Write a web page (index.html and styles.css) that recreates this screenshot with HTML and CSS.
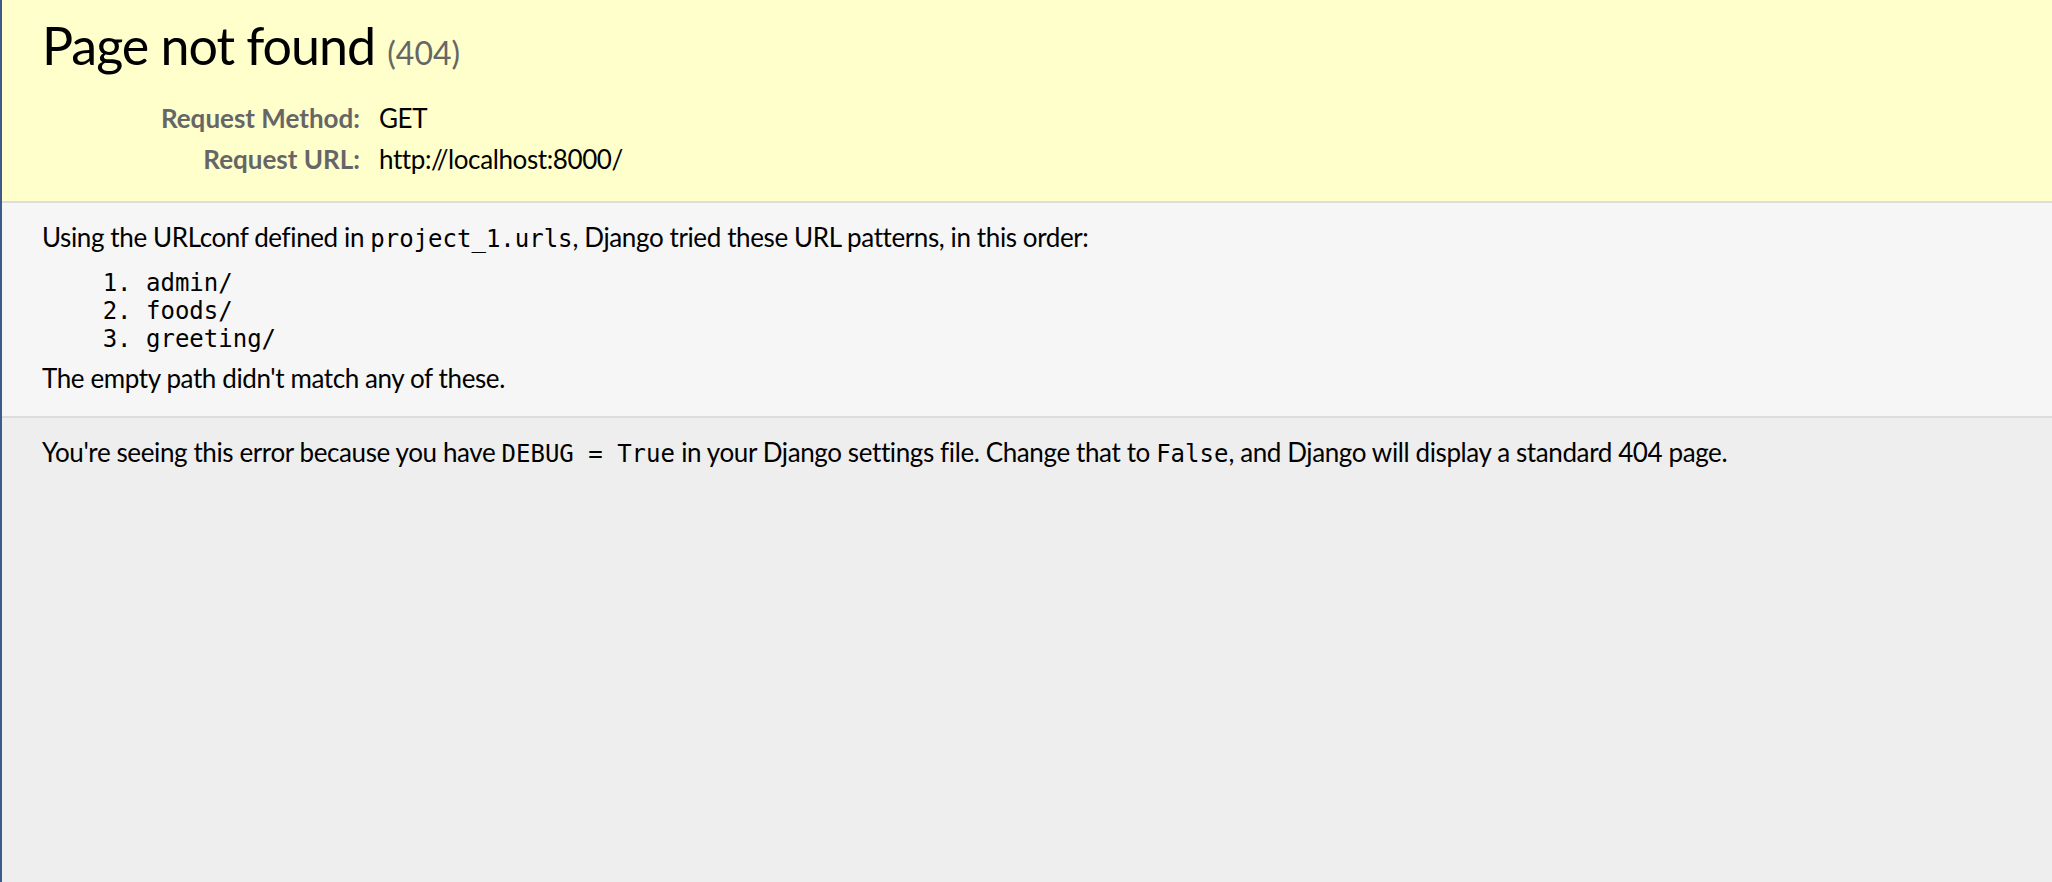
FILE: index.html
```
<!DOCTYPE html>
<html lang="en">
<head>
<meta charset="utf-8">
<title>Page not found at /</title>
<link rel="stylesheet" href="styles.css">
</head>
<body>
<div id="summary" class="section summary">
  <h1 class="title">Page not found <span class="code-num">(404)</span></h1>
  <table class="meta">
    <tr>
      <th class="meta-label">Request Method:</th>
      <td class="meta-value">GET</td>
    </tr>
    <tr>
      <th class="meta-label">Request URL:</th>
      <td class="meta-value">http://localhost:8000/</td>
    </tr>
  </table>
</div>
<div id="info" class="section info">
  <p class="text">Using the URLconf defined in <code class="mono">project_1.urls</code>, Django tried these URL patterns, in this order:</p>
  <ol class="patterns">
    <li class="pattern">admin/</li>
    <li class="pattern">foods/</li>
    <li class="pattern">greeting/</li>
  </ol>
  <p class="text">The empty path didn't match any of these.</p>
</div>
<div id="explanation" class="section explanation">
  <p class="text">You're seeing this error because you have <code class="mono">DEBUG = True</code> in your Django settings file. Change that to <code class="mono">False</code>, and Django will display a standard 404 page.</p>
</div>
</body>
</html>
```
FILE: styles.css
```
html, body, div, h1, p, ol, li, table, th, td, span, code {
  margin: 0;
  padding: 0;
}

html {
  background: #eee;
}

body {
  min-height: 100vh;
  box-sizing: border-box;
  border-left: 2px solid #3c5a8c;
  background: #eee;
  color: #000;
  font-family: Lato, "Noto Sans", sans-serif;
  font-size: 26px;
  line-height: 28px;
  letter-spacing: -0.015em;
}

.section {
  padding: 20px 40px;
  border-bottom: 2px solid #ddd;
}

.summary {
  background: #ffc;
  padding-bottom: 21px;
}

.info {
  background: #f6f6f6;
  padding-bottom: 24px;
}

.explanation {
  background: #eee;
  border-bottom: none;
}

.title {
  font-weight: normal;
  font-size: 52px;
  line-height: 50px;
  margin-bottom: 28px;
  letter-spacing: -0.02em;
}

.code-num {
  font-size: 32px;
  line-height: 1;
  color: #666;
  font-weight: normal;
  letter-spacing: 0;
}

.meta {
  border: none;
  border-collapse: collapse;
  width: 100%;
}

.meta-label,
.meta-value {
  vertical-align: top;
  padding: 4px 6px;
  font-size: 26px;
  line-height: 33px;
}

.meta-label {
  width: 312px;
  text-align: right;
  color: #666;
  padding-right: 13px;
  font-weight: bold;
  letter-spacing: 0;
}

.text {
  line-height: 28px;
}

.mono {
  font-family: "DejaVu Sans Mono", monospace;
  font-size: 24px;
  line-height: 1;
  letter-spacing: 0;
}

.patterns {
  margin: 18px 104px 11px;
}

.pattern {
  font-family: "DejaVu Sans Mono", monospace;
  font-size: 24px;
  line-height: 28px;
  letter-spacing: 0;
}
```
